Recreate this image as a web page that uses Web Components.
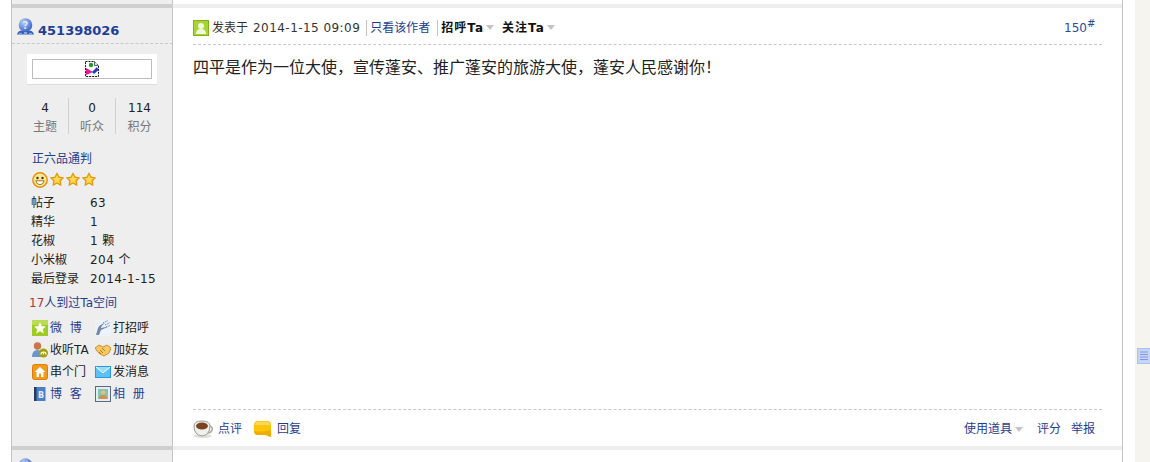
<!DOCTYPE html>
<html lang="zh">
<head>
<meta charset="utf-8">
<title>帖子</title>
<style>
  html, body { margin: 0; height: 462px; overflow: hidden; background: #fff; }
  body { display: flex; font: 12px/16px "DejaVu Sans", "Noto Sans CJK SC", sans-serif; color: #333; }
</style>
</head>
<body>
<forum-thread>
  <post-sep></post-sep>
  <thread-post>
    <user-side slot="side" name="451398026">
      <stat-trio slot="stats" a="4" b="0" c="114"></stat-trio>
      <profile-list slot="profile">
        <profile-row label="帖子">63</profile-row>
        <profile-row label="精华">1</profile-row>
        <profile-row label="花椒">1 颗</profile-row>
        <profile-row label="小米椒">204 个</profile-row>
        <profile-row label="最后登录">2014-1-15</profile-row>
      </profile-list>
      <action-grid slot="actions">
        <action-link icon="weibo" spaced>微 博</action-link>
        <action-link icon="hello" dark>打招呼</action-link>
        <action-link icon="listen" dark>收听TA</action-link>
        <action-link icon="friend" dark>加好友</action-link>
        <action-link icon="home" dark>串个门</action-link>
        <action-link icon="mail" dark>发消息</action-link>
        <action-link icon="blog" spaced>博 客</action-link>
        <action-link icon="album" spaced>相 册</action-link>
      </action-grid>
    </user-side>
    <post-body date="2014-1-15 09:09" floor="150">四平是作为一位大使，宣传蓬安、推广蓬安的旅游大使，蓬安人民感谢你！</post-body>
  </thread-post>
  <post-sep></post-sep>
  <next-post></next-post>
</forum-thread>
<side-strip></side-strip>

<script>
const GLOBE = `<defs><radialGradient id="g" cx=".35" cy=".3" r=".8"><stop offset="0" stop-color="#b5cdf6"/><stop offset="1" stop-color="#2f5cc4"/></radialGradient></defs><path d="M0 16.500q1-4 5-4h7q4 0 5 4z" fill="#3a62b4"/><path d="M2 15h3v2H2zM7 14h3v3H7zM12 15h3v2h-3z" fill="#8aa8e0"/><circle cx="8.500" cy="7" r="6.800" fill="url(#g)"/>`;
const ICONS = {
  online: GLOBE + `<text x="8.500" y="10.500" font-size="10" font-weight="700" text-anchor="middle" fill="#dbe6fa" font-family="DejaVu Sans">?</text>`,
  globe: GLOBE,
  broken: `<path d="M.5 .5h9l4 4v11H.5z" fill="#fff" stroke="#111" stroke-dasharray="2 1"/><path d="M9.500 .5v4h4" fill="#ddd" stroke="#666"/><circle cx="6" cy="4" r="2.200" fill="#1f9a30"/><path d="M1 14V7l7 4z" fill="#e8188a"/><path d="M7 11l5-5 1.500 3-4.500 4z" fill="#2438c8"/>`,
  smile: `<circle cx="8" cy="8" r="7.200" fill="#ffe98a" stroke="#e98a10" stroke-width="1.400"/><circle cx="5.500" cy="6" r="1.200" fill="#333"/><circle cx="10.500" cy="6" r="1.200" fill="#333"/><path d="M3.800 8.800h8.400q-.6 3.800-4.200 3.800t-4.200-3.800z" fill="#fff" stroke="#7a5a10" stroke-width=".8"/>`,
  star: `<path d="M7 1.300l1.900 3.900 4.300.6-3.100 3 .7 4.300L7 11l-3.800 2.100.7-4.300-3.100-3 4.300-.6z" fill="#ffd94f" stroke="#e8950f" stroke-width="1.300" stroke-linejoin="round"/>`,
  weibo: `<rect width="16" height="16" fill="#9ccc24"/><rect width="16" height="5" fill="#b8dc58"/><path d="M8 2l1.800 3.900 4.200.5-3.100 2.800.9 4.300L8 11.300l-3.800 2.200.9-4.300L2 6.400l4.200-.5z" fill="#f8fbe8"/>`,
  hello: `<rect width="16" height="16" fill="#eef2f9"/><path d="M1 15l2-7q1-3 7-5-4 3-4 5 4-1 7-1-5 2-7 3l-2 5z" fill="#7488a8"/><path d="M8 3l5-2.500M10 5l5-2.500M11 7l4-1.500" stroke="#4f80d8" stroke-dasharray="1.500 1"/>`,
  listen: `<circle cx="5.500" cy="4" r="3.700" fill="#c9764a"/><path d="M0 15q0-7 5.500-7T11 15z" fill="#6a98c8"/><circle cx="11.500" cy="11" r="4.500" fill="#a5a010"/><path d="M9 12.500a2.500 2.500 0 015 0M11.500 9.500v3" stroke="#fff" fill="none" stroke-width="1.200"/>`,
  friend: `<path d="M0 6l4-3 4 2 4-2 4 3-2 5-5 3-4-2-3-3z" fill="#f6c866" stroke="#d09030"/><path d="M5 8l3 3M7 6l3 3M4 10l2 2" stroke="#b87818"/>`,
  home: `<rect x=".5" y=".5" width="15" height="15" rx="2" fill="#f49a1a" stroke="#dc7d0c"/><path d="M8 3L2.500 8H4.500v5h2.500V9.500h2V13h2.500V8h2z" fill="#fff"/>`,
  mail: `<rect x=".5" y="2.500" width="15" height="11" fill="#5cc0f2" stroke="#2a98dc"/><path d="M1 3l7 6 7-6" fill="#9adcf8" stroke="#fff"/>`,
  blog: `<rect x="3" y="1" width="10.500" height="14" fill="#4a7fc8"/><rect x="2" y="1" width="2.500" height="14" fill="#2a3a58"/><text x="9" y="11.500" font-size="8" font-weight="700" text-anchor="middle" fill="#e4ecfa" font-family="DejaVu Sans">B</text>`,
  album: `<rect x=".5" y=".5" width="15" height="15" fill="#e6ecf2" stroke="#5a6a80"/><rect x="3" y="3" width="10" height="10" fill="#7cc8b0"/><circle cx="8" cy="6.500" r="2.200" fill="#eeb880"/><path d="M4 13q0-4 4-4t4 4z" fill="#d09050"/>`,
  author: `<rect width="16" height="16" fill="#a8d436"/><rect x=".5" y=".5" width="15" height="15" fill="none" stroke="#86b018"/><circle cx="8" cy="6" r="3" fill="#f2f8de"/><path d="M3 14q0-5 5-5t5 5z" fill="#f2f8de"/>`,
  coffee: `<ellipse cx="10" cy="17" rx="9" ry="2" fill="#e0e0da"/><path d="M1 7q0-5 8-5t8 5q0 9-8 10-8-1-8-10z" fill="#f0f0ea" stroke="#9a9a92"/><ellipse cx="9" cy="7" rx="6" ry="3.500" fill="#7a4420"/><path d="M17 7q3 1 2 4t-4 3" fill="none" stroke="#aaa" stroke-width="1.500"/>`,
  bubble: `<path d="M4 0h9Q17 0 17 4v11l-1 1-4-2H4Q0 14 0 10V4Q0 0 4 0z" fill="#fcc40c"/><path d="M4 1h9q3 0 3 3H1q0-3 3-3z" fill="#ffd94f"/><path d="M0 10q0 4 4 4h8l4 2 1-1V9q-8 3-17 1z" fill="#f2ab00"/>`,
  note: `<rect x=".5" y=".5" width="14" height="15" fill="#c6d5f6" stroke="#a9c0f2"/><path d="M3 4h8M3 6.500h8M3 9h8M3 11.500h8" stroke="#7e9be0" stroke-width="1.200"/>`
};

class UiIcon extends HTMLElement {
  connectedCallback() {
    const w = this.getAttribute('w') || 16;
    const h = this.getAttribute('h') || 16;
    const name = this.getAttribute('name');
    this.attachShadow({ mode: 'open' }).innerHTML = `
      <style>:host { display: block; width: ${w}px; height: ${h}px; flex: none; } svg { display: block; }</style>
      <svg width="${w}" height="${h}" viewBox="0 0 ${w} ${h}">${ICONS[name] || ''}</svg>`;
  }
}

class ForumThread extends HTMLElement {
  constructor() {
    super();
    this.attachShadow({ mode: 'open' }).innerHTML = `
      <style>
        :host { display: block; margin-left: 11px; width: 1110px; padding-top: 4px;
          border-left: 1px solid #c4c4c4; border-right: 1px solid #c4c4c4; height: 458px; overflow: hidden;
          background: linear-gradient(to right, #eeeeee 160px, #c4c4c4 160px, #c4c4c4 161px, #fff 161px); }
      </style>
      <slot></slot>`;
  }
}

class PostSep extends HTMLElement {
  constructor() {
    super();
    this.attachShadow({ mode: 'open' }).innerHTML = `
      <style>
        :host { display: grid; grid-template-columns: 161px 1fr; height: 4px; }
        i { background: #cfcfcf; } b { background: #eeeeee; }
      </style>
      <i></i><b></b>`;
  }
}

class ThreadPost extends HTMLElement {
  constructor() {
    super();
    this.attachShadow({ mode: 'open' }).innerHTML = `
      <style>
        :host { display: grid; grid-template-columns: 161px 1fr; height: 438px; }
      </style>
      <slot name="side"></slot>
      <slot></slot>`;
  }
}

class UserSide extends HTMLElement {
  constructor() {
    super();
    this.attachShadow({ mode: 'open' }).innerHTML = `
      <style>
        :host { display: block; color: #333; }
        .name { display: flex; align-items: center; gap: 4px; height: 36px; padding: 8px 0 0 5px; box-sizing: border-box;
          border-bottom: 1px dashed #c8c8c8; color: #1f3d9a; font-weight: 700; font-size: 13px; }
        .name ui-icon { margin-top: -7px; }
        .name span { margin-top: 2px; }
        .avatar { width: 130px; height: 30px; margin: 10px 0 0 15px; padding: 5px; box-sizing: border-box;
          background: #fff; box-shadow: 0 1px 0 #dcdcdc; }
        .frame { display: flex; justify-content: center; align-items: center; height: 20px; box-sizing: border-box; border: 1px solid #bdbdbd; }
        .rank { margin: 17px 0 0 20px; color: #1f3d8f; }
        .stars { display: flex; margin: 5px 0 0 20px; height: 16px; gap: 2px; }
        .visits { margin: 6px 0 0 17px; color: #1f3d8f; height: 16px; }
        .visits em { font-style: normal; color: #a83a3a; }
      </style>
      <div class="name"><ui-icon name="online" w="17" h="17"></ui-icon><span></span></div>
      <div class="avatar"><div class="frame"><ui-icon name="broken" w="15" h="16"></ui-icon></div></div>
      <slot name="stats"></slot>
      <div class="rank">正六品通判</div>
      <div class="stars"><ui-icon name="smile"></ui-icon><ui-icon name="star" w="14"></ui-icon><ui-icon name="star" w="14"></ui-icon><ui-icon name="star" w="14"></ui-icon></div>
      <slot name="profile"></slot>
      <div class="visits"><em>17</em>人到过Ta空间</div>
      <slot name="actions"></slot>`;
    this.shadowRoot.querySelector('.name span').textContent = this.getAttribute('name');
  }
}

class StatTrio extends HTMLElement {
  constructor() {
    super();
    const cells = [['a', '主题'], ['b', '听众'], ['c', '积分']].map(([k, t]) =>
      `<div><b>${this.getAttribute(k)}</b><span>${t}</span></div>`).join('');
    this.attachShadow({ mode: 'open' }).innerHTML = `
      <style>
        :host { display: grid; grid-template-columns: 47px 47px 47px; margin: 14px 0 0 10px; height: 36px; }
        div { display: flex; flex-direction: column; align-items: center; gap: 3px; padding-top: 2px; box-sizing: border-box; border-right: 1px solid #d0d0d0; }
        div:last-child { border-right: 0; }
        b { font-weight: 400; color: #222; height: 16px; }
        span { color: #777; height: 15px; }
      </style>${cells}`;
  }
}

class ProfileList extends HTMLElement {
  constructor() {
    super();
    this.attachShadow({ mode: 'open' }).innerHTML = `
      <style>:host { display: block; margin: 6px 0 0 19px; }</style><slot></slot>`;
  }
}

class ProfileRow extends HTMLElement {
  constructor() {
    super();
    this.attachShadow({ mode: 'open' }).innerHTML = `
      <style>
        :host { display: grid; grid-template-columns: 59px auto; height: 19px; line-height: 19px; color: #222; white-space: nowrap; letter-spacing: .45px; }
        span { letter-spacing: 0; }
      </style>
      <span></span><slot></slot>`;
    this.shadowRoot.querySelector('span').textContent = this.getAttribute('label');
  }
}

class ActionGrid extends HTMLElement {
  constructor() {
    super();
    this.attachShadow({ mode: 'open' }).innerHTML = `
      <style>
        :host { display: grid; grid-template-columns: 63px 63px; grid-auto-rows: 22px; margin: 6px 0 0 20px; }
      </style>
      <slot></slot>`;
  }
}

class ActionLink extends HTMLElement {
  connectedCallback() {
    const spaced = this.hasAttribute('spaced');
    const dark = this.hasAttribute('dark');
    this.attachShadow({ mode: 'open' }).innerHTML = `
      <style>
        :host { display: flex; align-items: center; gap: 2px; white-space: nowrap; color: ${dark ? '#222' : '#1f3d8f'}; ${spaced ? 'word-spacing: 4px;' : ''} }
      </style>
      <ui-icon name="${this.getAttribute('icon')}"></ui-icon><slot></slot>`;
  }
}

class PostBody extends HTMLElement {
  constructor() {
    super();
    const date = this.getAttribute('date');
    const floor = this.getAttribute('floor');
    this.attachShadow({ mode: 'open' }).innerHTML = `
      <style>
        :host { display: flex; flex-direction: column; padding: 0 20px; height: 438px; box-sizing: border-box; }
        .head { display: flex; align-items: center; height: 37px; padding-top: 3px; box-sizing: border-box; border-bottom: 1px dashed #c8c8c8; white-space: nowrap; color: #333; }
        .head ui-icon { margin-right: 3px; }
        .date { margin-left: 5px; letter-spacing: .45px; }
        .only { color: #1f3d8f; border-left: 1px solid #c4c4c4; margin-left: 6px; padding-left: 3px; }
        .act { font-weight: 700; color: #111; display: flex; align-items: center; letter-spacing: 1px; }
        .hello { border-left: 1px solid #c4c4c4; margin-left: 7px; padding-left: 3px; }
        .follow { margin-left: 8px; }
        .caret { width: 0; height: 0; border: 4.500px solid transparent; border-top: 5px solid #c4c4c4; border-bottom: 0; margin-left: 2px; }
        .floor { margin-left: auto; margin-right: 15px; color: #2c4a9c; position: relative; }
        sup { position: absolute; left: 100%; top: -1px; font-size: 10px; line-height: 10px; }
        .msg { flex: 1; padding-top: 11px; font: 16px/20px "Noto Sans CJK SC", "DejaVu Sans", sans-serif; color: #222; }
        .foot { display: flex; align-items: center; height: 37px; padding-top: 2px; border-top: 1px dashed #c8c8c8; color: #1f3d8f; box-sizing: border-box; }
        .foot ui-icon { margin-right: 5px; }
        .reply { margin-left: 12px; display: flex; align-items: center; }
        .reply ui-icon { margin-right: 6px; }
        .tools { margin-left: auto; margin-right: 7px; display: flex; align-items: center; }
        .tools .caret { margin-left: 3px; margin-right: 14px; }
        .tools span + span { margin-left: 10px; }
      </style>
      <div class="head">
        <ui-icon name="author"></ui-icon><span>发表于</span><span class="date">${date}</span>
        <span class="only">只看该作者</span>
        <span class="act hello">招呼Ta<i class="caret"></i></span>
        <span class="act follow">关注Ta<i class="caret"></i></span>
        <span class="floor">${floor}<sup>#</sup></span>
      </div>
      <div class="msg"><slot></slot></div>
      <div class="foot">
        <ui-icon name="coffee" w="20" h="20"></ui-icon><span>点评</span>
        <span class="reply"><ui-icon name="bubble" w="17" h="16"></ui-icon>回复</span>
        <span class="tools"><span>使用道具</span><i class="caret"></i><span>评分</span><span>举报</span></span>
      </div>`;
  }
}

class NextPost extends HTMLElement {
  constructor() {
    super();
    this.attachShadow({ mode: 'open' }).innerHTML = `
      <style>:host { display: block; padding: 8px 0 0 5px; }</style>
      <ui-icon name="globe" w="17" h="17"></ui-icon>`;
  }
}

class SideStrip extends HTMLElement {
  constructor() {
    super();
    this.attachShadow({ mode: 'open' }).innerHTML = `
      <style>
        :host { display: block; width: 15px; height: 462px; margin-left: 12px; background: #f6f4ef; position: relative; }
        ui-icon { position: absolute; left: 2px; top: 348px; }
      </style>
      <ui-icon name="note" w="15" h="16"></ui-icon>`;
  }
}

customElements.define('ui-icon', UiIcon);
customElements.define('forum-thread', ForumThread);
customElements.define('post-sep', PostSep);
customElements.define('thread-post', ThreadPost);
customElements.define('user-side', UserSide);
customElements.define('stat-trio', StatTrio);
customElements.define('profile-list', ProfileList);
customElements.define('profile-row', ProfileRow);
customElements.define('action-grid', ActionGrid);
customElements.define('action-link', ActionLink);
customElements.define('post-body', PostBody);
customElements.define('next-post', NextPost);
customElements.define('side-strip', SideStrip);
</script>
</body>
</html>
